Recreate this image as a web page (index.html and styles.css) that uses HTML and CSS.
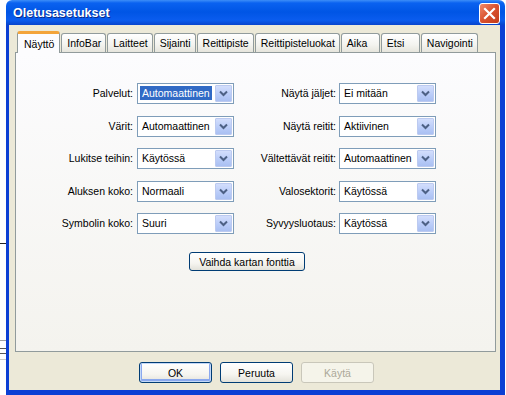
FILE: index.html
```html
<!DOCTYPE html>
<html lang="fi">
<head>
    <meta charset="UTF-8">
    <title>Oletusasetukset</title>
    <link rel="stylesheet" href="styles.css">
</head>
<body>

<div class="desk">
    <div class="desk-line dark"></div>
    <div class="desk-line grey"></div>
    <div class="desk-dash"></div>
    <div class="desk-line light"></div>
</div>

<div class="window">
    <div class="titlebar">
        <span class="title">Oletusasetukset</span>
        <span class="close">
            <svg width="13" height="13" viewBox="0 0 13 13">
                <path d="M2 2 L11 11 M11 2 L2 11" stroke="#fff" stroke-width="2.2" stroke-linecap="square"/>
            </svg>
        </span>
    </div>

    <div class="frame">
        <div class="tabs">
            <div class="tab active">Näyttö</div>
            <div class="tab">InfoBar</div>
            <div class="tab">Laitteet</div>
            <div class="tab">Sijainti</div>
            <div class="tab">Reittipiste</div>
            <div class="tab">Reittipisteluokat</div>
            <div class="tab">Aika</div>
            <div class="tab">Etsi</div>
            <div class="tab">Navigointi</div>
        </div>

        <div class="panel">
            <div class="form">
                <label class="lbl">Palvelut:</label>
                <div class="combo"><span class="value"><span class="selected">Automaattinen</span></span><span class="drop"></span></div>
                <label class="lbl right">Näytä jäljet:</label>
                <div class="combo"><span class="value">Ei mitään</span><span class="drop"></span></div>

                <label class="lbl">Värit:</label>
                <div class="combo"><span class="value">Automaattinen</span><span class="drop"></span></div>
                <label class="lbl right">Näytä reitit:</label>
                <div class="combo"><span class="value">Aktiivinen</span><span class="drop"></span></div>

                <label class="lbl">Lukitse teihin:</label>
                <div class="combo"><span class="value">Käytössä</span><span class="drop"></span></div>
                <label class="lbl right">Vältettävät reitit:</label>
                <div class="combo"><span class="value">Automaattinen</span><span class="drop"></span></div>

                <label class="lbl">Aluksen koko:</label>
                <div class="combo"><span class="value">Normaali</span><span class="drop"></span></div>
                <label class="lbl right">Valosektorit:</label>
                <div class="combo"><span class="value">Käytössä</span><span class="drop"></span></div>

                <label class="lbl">Symbolin koko:</label>
                <div class="combo"><span class="value">Suuri</span><span class="drop"></span></div>
                <label class="lbl right">Syvyysluotaus:</label>
                <div class="combo"><span class="value">Käytössä</span><span class="drop"></span></div>
            </div>

            <button class="btn font-btn">Vaihda kartan fonttia</button>
        </div>

        <div class="actions">
            <button class="btn default">OK</button>
            <button class="btn">Peruuta</button>
            <button class="btn" disabled>Käytä</button>
        </div>
    </div>
</div>

</body>
</html>
```

FILE: styles.css
```css
body {
    margin: 0;
    width: 506px;
    height: 395px;
    overflow: hidden;
    display: flex;
    background: #ffffff;
    font-family: "Liberation Sans", Arial, sans-serif;
    font-size: 10.5px;
    color: #000000;
}

/* the application behind the dialog */
.desk {
    width: 6px;
    flex-shrink: 0;
    overflow: hidden;
    display: flex;
    flex-direction: column;
}

.desk-line {
    height: 1px;
}

.desk-line.dark {
    margin-top: 243px;
    background: #222;
}

.desk-line.grey {
    margin-top: 96px;
    background: #a0a0a0;
}

.desk-line.light {
    margin-top: 5px;
    background: #c8c8c8;
}

.desk-dash {
    margin-top: 7px;
    height: 4px;
    border-top: 1px dashed #555;
    border-bottom: 1px dashed #555;
}

/* dialog window */
.window {
    width: 499px;
    height: 395px;
    display: flex;
    flex-direction: column;
}

.titlebar {
    height: 25px;
    flex-shrink: 0;
    display: flex;
    align-items: center;
    justify-content: space-between;
    padding: 0 5px 0 7px;
    background: linear-gradient(#3d8ef8 0px, #0a62f0 3px, #0055e5 12px, #0a5cee 20px, #0744cc 25px);
    border-radius: 6px 6px 0 0;
}

.title {
    color: #ffffff;
    font-weight: bold;
    font-size: 12.5px;
    text-shadow: 1px 1px 0 #0a2a8a;
    padding-top: 1px;
}

.close {
    width: 19px;
    height: 19px;
    display: flex;
    align-items: center;
    justify-content: center;
    border: 1px solid #ffffff;
    border-radius: 3px;
    background: linear-gradient(135deg, #f08a6c, #d9512e 50%, #c23c1c);
    margin-top: 1px;
}

.frame {
    flex: 1;
    display: flex;
    flex-direction: column;
    background: #ece9d8;
    border-left: 3px solid #0b3fd4;
    border-right: 5px solid #0b3fd4;
    border-bottom: 5px solid #0b3fd4;
    padding: 6px 4px 0 6px;
}

/* tabs */
.tabs {
    height: 21px;
    display: flex;
    align-items: flex-end;
    gap: 1px;
    padding-left: 2px;
}

.tab {
    height: 19px;
    box-sizing: border-box;
    min-width: 39px;
    padding: 3px 4px 0 5px;
    border: 1px solid #919b9c;
    border-bottom: none;
    border-radius: 3px 3px 0 0;
    background: linear-gradient(#ffffff, #f3f3ef 60%, #e6e5dd);
    white-space: nowrap;
}

.tab.active {
    height: 22px;
    margin-bottom: -1px;
    padding: 4px 5px 0 6px;
    background: #fcfcfe;
    border-top: 3px solid #f3a43a;
    position: relative;
    z-index: 1;
}

.panel {
    height: 300px;
    box-sizing: border-box;
    border: 1px solid #919b9c;
    background: linear-gradient(#fcfcfe, #f4f3ee);
    padding-top: 30px;
}

.form {
    display: grid;
    grid-template-columns: 121px 97px 105px 97px;
    grid-auto-rows: 21px;
    row-gap: 11.5px;
}

.lbl {
    text-align: right;
    line-height: 21px;
    padding-right: 4px;
    white-space: nowrap;
}

.lbl.right {
    padding-right: 3px;
}

.combo {
    display: flex;
    border: 1px solid #7f9db9;
    background: #ffffff;
}

.combo .value {
    flex: 1;
    line-height: 19px;
    padding-left: 4px;
    white-space: nowrap;
    overflow: hidden;
}

.combo .selected {
    display: inline-block;
    margin-left: -2px;
    padding: 0 2px;
    line-height: 14px;
    background: #316ac5;
    color: #ffffff;
}

.combo .drop {
    width: 15px;
    margin: 1px;
    border: 1px solid #bccaf0;
    border-radius: 1px;
    background-image: url("data:image/svg+xml,%3Csvg xmlns='http://www.w3.org/2000/svg' width='9' height='7'%3E%3Cpath d='M1 1.5 L4.5 5 L8 1.5' fill='none' stroke='%234d6185' stroke-width='2'/%3E%3C/svg%3E"), linear-gradient(#d3defc, #b8cbf8 60%, #aac0f2);
    background-repeat: no-repeat;
    background-position: center;
}

/* buttons */
.btn {
    font-family: "Liberation Sans", Arial, sans-serif;
    font-size: 10.5px;
    color: #000000;
    height: 21px;
    padding: 0;
    border: 1px solid #003c74;
    border-radius: 3px;
    background: linear-gradient(#ffffff, #f6f5f0 60%, #e3e2da);
}

.btn.default {
    box-shadow: inset 0 0 0 1px #c3d8f8, inset 0 -1px 0 2px #8aa8ee;
}

.btn:disabled {
    color: #aca899;
    border-color: #c9c7ba;
    background: #f5f4ea;
}

.font-btn {
    display: block;
    height: 19px;
    width: 116px;
    margin: 18px 0 0 173px;
}

.actions {
    display: flex;
    justify-content: center;
    gap: 8px;
    margin-top: 10px;
    padding-left: 2px;
}

.actions .btn {
    width: 73px;
}
```
